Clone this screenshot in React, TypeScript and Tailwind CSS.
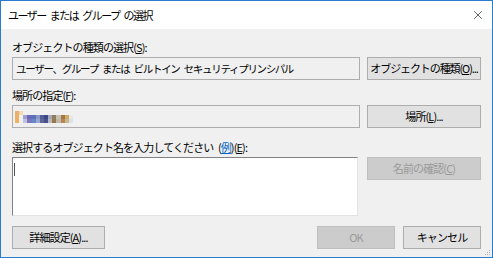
import { X } from 'lucide-react';

const font = "font-['Noto_Sans_CJK_JP','Noto_Sans',sans-serif]";

function Btn({ children, disabled, className = '' }: { children: React.ReactNode; disabled?: boolean; className?: string }) {
  return (
    <div
      className={`h-[23px] flex items-center justify-center border whitespace-nowrap leading-none ${
        disabled ? 'bg-[#cccccc] border-[#bfbfbf] text-[#9a9a9a]' : 'bg-[#e1e1e1] border-[#adadad] text-black'
      } ${className}`}
    >
      {children}
    </div>
  );
}

const mosaic = [
  ['#e8b070', '#f4d8b0', '#f0f0f0', '#f0f0f0', '#f0f0f0', '#f0f0f0', '#f0f0f0', '#f0f0f0', '#f0f0f0', '#f0f0f0', '#f0f0f0', '#f0f0f0', '#f0f0f0', '#f0f0f0'],
  ['#f0b060', '#f0f0f0', '#a0a0d0', '#6a6ab8', '#5b74b8', '#8a98c8', '#545c98', '#3a4888', '#a8a8b8', '#8c8060', '#c8c0b0', '#a07848', '#d0a868', '#e8e8e8'],
  ['#f0b060', '#f0f0f0', '#c0c0e0', '#7878c0', '#6888c8', '#98a8d0', '#606898', '#485090', '#b8b8c0', '#987848', '#c0b8b0', '#b88850', '#c8b890', '#e0e0e8'],
];

export default function App() {
  return (
    <div className={`w-[493px] h-[258px] flex flex-col border border-[#2b7bd0] bg-[#f0f0f0] text-black ${font}`}>
      {/* title bar */}
      <div className="h-[28px] bg-white flex items-center justify-between pl-[7px] pr-[7px] shrink-0">
        <span className="text-[11px] tracking-[-1.5px] [word-spacing:3px]">ユーザー または グループ の選択</span>
        <X className="w-[14px] h-[14px] text-[#222]" strokeWidth={1.2} />
      </div>

      <div className="flex-1 flex flex-col px-[11px] pt-[10px] relative text-[11px] tracking-[-0.9px] [word-spacing:3px]">
        <div className="h-[16px] leading-[16px]">
          オブジェクトの種類の選択(<span className="underline">S</span>):
        </div>
        <div className="mt-[2px] flex gap-[7px]">
          <div className="flex-1 min-w-0 h-[23px] border border-[#adadad] bg-[#f0f0f0] flex items-center px-[3px] whitespace-nowrap overflow-hidden text-[10.5px] tracking-[-1.3px]">
            ユーザー、グループ または ビルトイン セキュリティプリンシパル
          </div>
          <Btn className="w-[114px] tracking-[-1.1px]">
            オブジェクトの種類(<span className="underline">O</span>)...
          </Btn>
        </div>

        <div className="mt-[7px] h-[16px] leading-[16px]">
          場所の指定(<span className="underline">F</span>):
        </div>
        <div className="mt-[2px] flex gap-[7px]">
          <div className="flex-1 min-w-0 h-[23px] border border-[#adadad] bg-[#f0f0f0] flex items-center px-[2px]">
            <svg width="58" height="12" viewBox="0 0 14 3" preserveAspectRatio="none" shapeRendering="crispEdges">
              {mosaic.map((row, y) =>
                row.map((c, x) => <rect key={`${x}-${y}`} x={x} y={y} width="1" height="1" fill={c} />)
              )}
            </svg>
          </div>
          <Btn className="w-[114px]">
            場所(<span className="underline">L</span>)...
          </Btn>
        </div>

        <div className="mt-[11px] h-[16px] leading-[16px]">
          選択するオブジェクト名を入力してください (<span className="text-[#0066cc] underline">例</span>)(<span className="underline">E</span>):
        </div>
        <div className="mt-[2px] flex gap-[9px] items-start">
          <div className="flex-1 min-w-0 h-[59px] bg-white border-t border-l border-t-[#828282] border-l-[#828282] border-r border-b border-r-[#e3e3e3] border-b-[#e3e3e3] pl-[1px] pt-[5px]">
            <div className="w-[1px] h-[13px] bg-[#555]" />
          </div>
          <Btn disabled className="w-[114px]">
            名前の確認(<span className="underline">C</span>)
          </Btn>
        </div>

        <div className="mt-[10px] flex items-center">
          <Btn className="w-[93px]">
            詳細設定(<span className="underline">A</span>)...
          </Btn>
          <div className="flex-1" />
          <Btn disabled className="w-[78px]">OK</Btn>
          <Btn className="w-[78px] ml-[8px]">キャンセル</Btn>
        </div>

        {/* resize grip */}
        <svg className="absolute right-[1px] bottom-[1px]" width="6" height="6" viewBox="0 0 6 6">
          <rect x="4" y="0" width="1" height="1" fill="#b0b0b0" />
          <rect x="2" y="2" width="1" height="1" fill="#b0b0b0" />
          <rect x="4" y="2" width="1" height="1" fill="#b0b0b0" />
          <rect x="0" y="4" width="1" height="1" fill="#b0b0b0" />
          <rect x="2" y="4" width="1" height="1" fill="#b0b0b0" />
          <rect x="4" y="4" width="1" height="1" fill="#b0b0b0" />
        </svg>
      </div>
    </div>
  );
}
